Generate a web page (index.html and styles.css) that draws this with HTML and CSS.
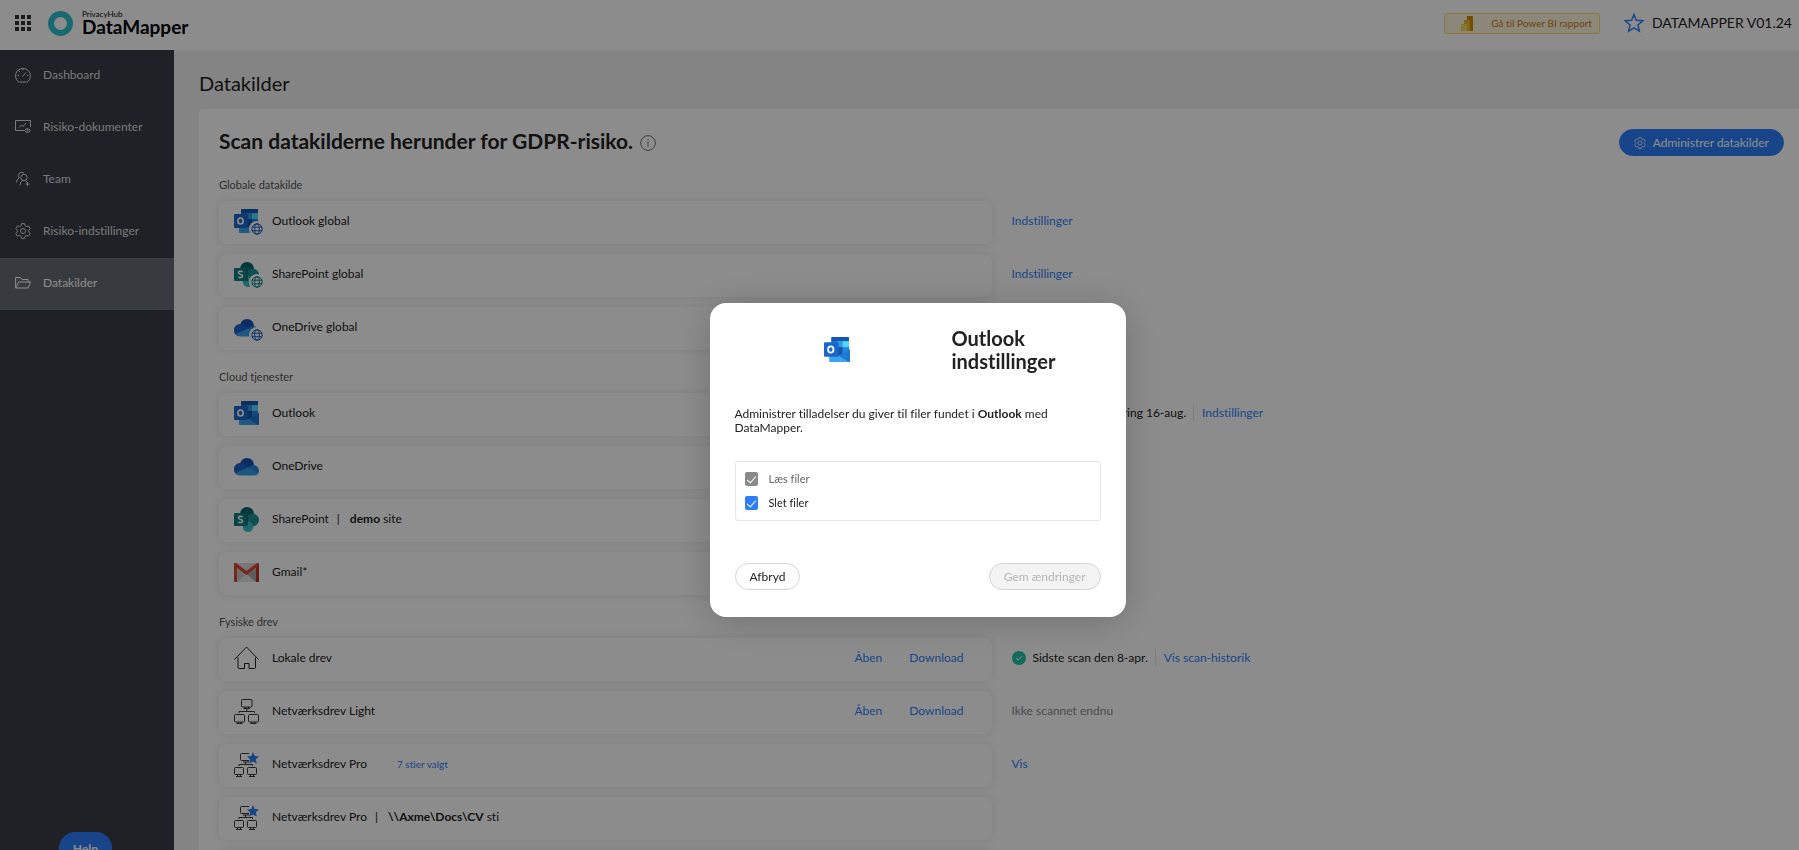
FILE: index.html
```html
<!DOCTYPE html>
<html lang="da">

<head>
	<meta charset="utf-8">
	<title>DataMapper - Datakilder</title>
	<link rel="stylesheet" href="styles.css">
</head>

<body>
	<!-- shared icons -->
	<svg class="sprite" aria-hidden="true">
		<symbol id="i-outlook" viewBox="0 0 25 25">
			<rect x="7" y="0" width="17" height="17" rx="1" fill="#28a8ea" />
			<rect x="7" y="0" width="17" height="4" rx="1" fill="#1557b0" />
			<rect x="7" y="4" width="6" height="7" fill="#1674c9" />
			<rect x="13" y="4" width="5" height="6" fill="#2c9be6" />
			<rect x="18" y="4" width="6" height="6" fill="#50d9ff" />
			<rect x="13" y="10" width="5" height="7" fill="#1257ae" />
			<rect x="18" y="10" width="6" height="6" fill="#2481d8" />
			<path d="M5 13l20-1v11q0 1-1 1H6q-1 0-1-1z" fill="#39a5ee" />
			<path d="M13 10h5v8h-5z" fill="#1556a9" />
			<path d="M18 10h6v2l-6 4z" fill="#2783da" />
			<path d="M25 12v11q0 1-1 1l-10-6z" fill="#1d78d0" />
			<rect x="0" y="5" width="14" height="14" rx="1" fill="#1c66cb" />
			<ellipse cx="6.500" cy="12" rx="2.600" ry="3" fill="none" stroke="#fff" stroke-width="1.700" />
		</symbol>
		<symbol id="i-onedrive" viewBox="0 0 25 25">
			<circle cx="13" cy="11" r="7" fill="#1450b0" />
			<path d="M0 15.500a6 6 0 0 1 6-6.500q2.500 0 4.500 1.300l8 4.700L3 20.500Q0 19 0 15.500z" fill="#1a62c8" />
			<path d="M13.500 13.500l5-2.500a6 6 0 0 1 6.500 5.500q0 2-1.500 3.500z" fill="#2b86df" />
			<path d="M1.500 19L14 13.500l10.500 5.500q-1.200 2.500-4 2.500H6q-3 0-4.500-2.500z" fill="#349ee8" />
		</symbol>
		<symbol id="i-sharepoint" viewBox="0 0 25 25">
			<circle cx="13" cy="7" r="7" fill="#046468" />
			<circle cx="18.500" cy="13" r="6.500" fill="#1b9296" />
			<circle cx="14" cy="19.800" r="5.200" fill="#35c0c8" />
			<path d="M7 6h6q1 0 1 1v12H8z" fill="#044f53" opacity=".6" />
			<rect x="0" y="6" width="13" height="13" rx="1" fill="#0c7c80" />
			<path d="M8.800 9.800q-4.400-1.600-4.400.8 0 1.200 2.100 1.800 2.300.6 2.100 2-.4 2-4.400.7" fill="none" stroke="#fff" stroke-width="1.500" />
		</symbol>
		<symbol id="i-gmail" viewBox="0 0 25 25">
			<path d="M1 3h23v19H1z" fill="#d9d9d9" />
			<path d="M3 9l9.500 6L22 9v13H3z" fill="#c9c9c9" />
			<path d="M22 9v13h-3l-7-7z" fill="#aaa" />
			<path d="M3 22l9.500-8 9.500 8z" fill="#e3e3e3" />
			<path d="M0 4q0-1 1-1h1l10.500 8L23 3h1q1 0 1 1v17q0 1-1 1h-2V8l-9.500 7L3 8v14H1q-1 0-1-1z" fill="#d8473a" />
			<path d="M22 8l3-3v16q0 1-1 1h-2z" fill="#b5342a" />
		</symbol>
		<symbol id="i-globe" viewBox="0 0 16 16">
			<circle cx="8" cy="8" r="8" fill="#fff" />
			<g fill="none" stroke="currentColor">
				<circle cx="8" cy="8" r="5.200" />
				<ellipse cx="8" cy="8" rx="2.300" ry="5.200" />
				<path d="M3 6.200h10M3 9.800h10" />
			</g>
		</symbol>
		<symbol id="i-house" viewBox="0 0 25 25">
			<path d="M.5 13.500L12.500 1l12 12.500M4 11.500v10q0 1 1 1h5.500v-5h4.500v5h5.500q1 0 1-1v-10" fill="none" stroke="#222" />
		</symbol>
		<symbol id="i-network" viewBox="0 0 25 25">
			<g fill="none" stroke="#222" stroke-width=".9">
				<rect x="7.500" y=".5" width="10.500" height="7.500" rx="1" />
				<rect x=".5" y="15.500" width="10" height="7.500" rx="1" />
				<rect x="14.500" y="15.500" width="10" height="7.500" rx="1" />
				<path d="M11 8v1.500M14.500 8v1.500M9.500 9.500H16M12.800 10v2.500M5 14v-1.500h15.500V14M4 23v1.500M7 23v1.500M2.500 24.500h6M18 23v1.500M21 23v1.500M16.500 24.500h6" />
			</g>
		</symbol>
		<symbol id="i-network-pro" viewBox="0 0 25 25">
			<g fill="none" stroke="#222" stroke-width=".9">
				<path d="M15 1.500H7.500q-1 0-1 1v5q0 1 1 1H15M9 10h6" />
				<rect x=".5" y="15.500" width="9" height="7" rx="1" />
				<rect x="13.500" y="15.500" width="9" height="7" rx="1" />
				<path d="M11.500 10v2.500M5 14v-1.500h13.500V14M3.500 23v1.500M6.500 23v1.500M2 24.500h6M16.500 23v1.500M19.500 23v1.500M15 24.500h6" />
			</g>
			<path d="M19 0l1.700 4 4.300.4-3.200 2.900 1 4.300L19 9.400l-3.800 2.200 1-4.300L13 4.400l4.300-.4z" fill="#2a7cf0" />
		</symbol>
		<symbol id="i-gear" viewBox="0 0 16 16">
			<g fill="none" stroke="currentColor" stroke-linejoin="round">
				<path d="M6.500.6h3l.5 2.100 1.500.9 2.100-.7 1.600 2.700-1.500 1.500v1.800l1.500 1.500-1.600 2.700-2.100-.7-1.500.9-.5 2.100h-3L6 13.300l-1.500-.9-2.100.7L.8 10.400l1.500-1.500V7.100L.8 5.600l1.600-2.700 2.100.7L6 2.700z" />
				<circle cx="8" cy="8" r="2.500" />
			</g>
		</symbol>
	</svg>

	<header class="topbar">
		<button class="apps" type="button" aria-label="Apps">
			<svg viewBox="0 0 16 16" width="16" height="16">
				<path d="M0 0h4v4H0zM6 0h4v4H6zM12 0h4v4h-4zM0 6h4v4H0zM6 6h4v4H6zM12 6h4v4h-4zM0 12h4v4H0zM6 12h4v4H6zM12 12h4v4h-4z" fill="#333" />
			</svg>
		</button>
		<a class="logo" href="#">
			<svg viewBox="0 0 25 25" width="25" height="25">
				<circle cx="12.500" cy="12.500" r="9.500" fill="none" stroke="#2fc0cd" stroke-width="6" />
			</svg>
			<span class="logo-text">
				<small>PrivacyHub</small>
				<b>DataMapper</b>
			</span>
		</a>
		<button class="powerbi" type="button">
			<svg viewBox="0 0 12 15" width="12" height="15">
				<path d="M6 0h5q1 0 1 1v14H6z" fill="#d48a0c" />
				<path d="M3 4h5q1 0 1 1v10H3z" fill="#edba2b" />
				<path d="M0 8h5q1 0 1 1v6H0z" fill="#f7d75e" />
			</svg>
			Gå til Power BI rapport
		</button>
		<div class="plan">
			<svg viewBox="0 0 20 20" width="20" height="20">
				<path d="M10 1.500l2.400 5.700 6.400.5-4.900 4.200 1.500 6.300-5.400-3.300-5.400 3.300 1.500-6.300-4.900-4.200 6.400-.5z" fill="none" stroke="#2d7ff9" stroke-width="1.500" />
			</svg>
			<span>DATAMAPPER V01.24</span>
		</div>
	</header>

	<div class="layout">
		<nav class="sidebar">
			<a href="#">
				<svg viewBox="0 0 16 16" width="16" height="16" fill="none" stroke="currentColor">
					<path d="M3 14.500a7.500 7.500 0 1 1 10 0q-.5.600-1.500.600h-7q-1 0-1.500-.6z" />
					<path d="M7.500 9.500L11 5.500M8 2v1.500M4 4l1 1M2.500 8.500H4M12 8.500h1.500" />
				</svg>
				Dashboard
			</a>
			<a href="#">
				<svg viewBox="0 0 16 16" width="16" height="16" fill="none" stroke="currentColor">
					<path d="M9 11.500H.5v-10h15V8M4 8.500l2.500-2.500L8 7.500 11 4" />
					<path d="M9.500 11.500q3-4 6 0-3 4-6 0z" />
					<circle cx="12.500" cy="11.500" r=".7" />
				</svg>
				Risiko-dokumenter
			</a>
			<a href="#">
				<svg viewBox="0 0 16 16" width="16" height="16" fill="none" stroke="currentColor">
					<circle cx="9" cy="6.500" r="3.200" />
					<path d="M5 14.500q0-3.500 2.500-5M10.500 9.500l2 2.500M12.500 11v4M10.500 13h4M1.500 11.500q0-3 2.500-4.500M4.500 7q-2.500-2-.5-4.500t5-.5" />
				</svg>
				Team
			</a>
			<a href="#"><svg width="16" height="16"><use href="#i-gear" /></svg>Risiko-indstillinger</a>
			<a href="#" class="active">
				<svg viewBox="0 0 16 16" width="16" height="16" fill="none" stroke="currentColor">
					<path d="M.6 13V2.500h5l1.500 2h6v2.500M.6 13l3-6h12l-2.500 6z" />
				</svg>
				Datakilder
			</a>
			<button class="help" type="button">Help</button>
		</nav>

		<main class="content">
			<h1>Datakilder</h1>
			<div class="panel">
				<div class="panel-head">
					<h2>Scan datakilderne herunder for GDPR-risiko.</h2>
					<svg class="info" viewBox="0 0 16 16" width="16" height="16">
						<circle cx="8" cy="8" r="7.400" fill="none" stroke="#777" />
						<path d="M8 6.500V12M8 4v1.300" stroke="#777" />
					</svg>
					<button class="btn btn-primary" type="button">
						<svg width="12" height="12"><use href="#i-gear" /></svg>
						Administrer datakilder
					</button>
				</div>

				<section class="group">
					<h3>Globale datakilde</h3>
					<div class="row">
						<div class="source">
							<span class="icon"><svg><use href="#i-outlook" /></svg><svg class="globe"><use href="#i-globe" /></svg></span>
							<span>Outlook global</span>
						</div>
						<div class="status"><a href="#">Indstillinger</a></div>
					</div>
					<div class="row">
						<div class="source">
							<span class="icon"><svg><use href="#i-sharepoint" /></svg><svg class="globe globe-teal"><use href="#i-globe" /></svg></span>
							<span>SharePoint global</span>
						</div>
						<div class="status"><a href="#">Indstillinger</a></div>
					</div>
					<div class="row">
						<div class="source">
							<span class="icon"><svg><use href="#i-onedrive" /></svg><svg class="globe"><use href="#i-globe" /></svg></span>
							<span>OneDrive global</span>
						</div>
					</div>
				</section>

				<section class="group">
					<h3>Cloud tjenester</h3>
					<div class="row">
						<div class="source">
							<span class="icon"><svg><use href="#i-outlook" /></svg></span>
							<span>Outlook</span>
						</div>
						<div class="status">
							<svg class="check" viewBox="0 0 14 14"><circle cx="7" cy="7" r="7" fill="#24bfa5" /><path d="M4 7l2.200 2.200L10 5" fill="none" stroke="#fff" /></svg>
							<span>Seneste rapportering 16-aug.</span>
							<a class="next" href="#">Indstillinger</a>
						</div>
					</div>
					<div class="row">
						<div class="source">
							<span class="icon"><svg><use href="#i-onedrive" /></svg></span>
							<span>OneDrive</span>
						</div>
					</div>
					<div class="row">
						<div class="source">
							<span class="icon"><svg><use href="#i-sharepoint" /></svg></span>
							<span>SharePoint</span>
							<span class="bar">|</span>
							<span><b>demo</b> site</span>
						</div>
					</div>
					<div class="row">
						<div class="source">
							<span class="icon"><svg><use href="#i-gmail" /></svg></span>
							<span>Gmail*</span>
						</div>
					</div>
				</section>

				<section class="group">
					<h3>Fysiske drev</h3>
					<div class="row">
						<div class="source">
							<span class="icon"><svg><use href="#i-house" /></svg></span>
							<span>Lokale drev</span>
							<div class="actions"><a href="#">Åben</a><a href="#">Download</a></div>
						</div>
						<div class="status">
							<svg class="check" viewBox="0 0 14 14"><circle cx="7" cy="7" r="7" fill="#24bfa5" /><path d="M4 7l2.200 2.200L10 5" fill="none" stroke="#fff" /></svg>
							<span>Sidste scan den 8-apr.</span>
							<a class="next" href="#">Vis scan-historik</a>
						</div>
					</div>
					<div class="row">
						<div class="source">
							<span class="icon"><svg><use href="#i-network" /></svg></span>
							<span>Netværksdrev Light</span>
							<div class="actions"><a href="#">Åben</a><a href="#">Download</a></div>
						</div>
						<div class="status muted">Ikke scannet endnu</div>
					</div>
					<div class="row">
						<div class="source">
							<span class="icon"><svg><use href="#i-network-pro" /></svg></span>
							<span>Netværksdrev Pro</span>
							<a class="paths" href="#">7 stier valgt</a>
						</div>
						<div class="status"><a href="#">Vis</a></div>
					</div>
					<div class="row">
						<div class="source">
							<span class="icon"><svg><use href="#i-network-pro" /></svg></span>
							<span>Netværksdrev Pro</span>
							<span class="bar">|</span>
							<span><b>\\Axme\Docs\CV</b> sti</span>
						</div>
					</div>
					<div class="row">
						<div class="source"></div>
					</div>
				</section>
			</div>
		</main>
	</div>

	<div class="mask">
		<div class="modal" role="dialog" aria-modal="true" aria-labelledby="modal-title">
			<div class="modal-head">
				<svg width="26" height="26"><use href="#i-outlook" /></svg>
				<h2 id="modal-title">Outlook indstillinger</h2>
			</div>
			<p>Administrer tilladelser du giver til filer fundet i <b>Outlook</b> med DataMapper.</p>
			<div class="permissions">
				<label class="disabled"><input type="checkbox" checked disabled>Læs filer</label>
				<label><input type="checkbox" checked>Slet filer</label>
			</div>
			<div class="modal-foot">
				<button class="btn" type="button">Afbryd</button>
				<button class="btn" type="button" disabled>Gem ændringer</button>
			</div>
		</div>
	</div>
</body>

</html>
```
FILE: styles.css
```css
* {
	box-sizing: border-box;
}

body {
	margin: 0;
	height: 100vh;
	display: flex;
	flex-direction: column;
	overflow: hidden;
	background-color: #f0f0f0;
	color: #222;
	font-family: Lato, "Liberation Sans", sans-serif;
	font-size: 12px;
	font-variant-ligatures: none;
	line-height: 16px;
}

h1,
h2,
h3,
p {
	margin: 0;
}

a {
	color: #2d7ff9;
	text-decoration: none;
}

b {
	font-weight: 700;
}

button {
	font: inherit;
	color: inherit;
	cursor: pointer;
}

svg {
	flex: none;
}

.sprite {
	position: absolute;
	width: 0;
	height: 0;
}

/* top bar */
.topbar {
	display: flex;
	align-items: center;
	flex: none;
	height: 50px;
	padding: 0 7px 4px 15px;
	background-color: #fff;
}

.apps {
	display: flex;
	margin-right: 17px;
	padding: 0;
	border: 0;
	background: none;
}

.logo {
	display: flex;
	align-items: center;
	gap: 9px;
	color: #000;
}

.logo-text {
	display: flex;
	flex-direction: column;
}

.logo-text small {
	font-size: 8px;
	line-height: 8px;
}

.logo-text b {
	font-size: 19px;
	line-height: 18px;
}

.powerbi {
	display: flex;
	align-items: center;
	gap: 18px;
	height: 21px;
	margin-left: auto;
	padding: 0 7px 0 16px;
	border: 1px solid #ffd666;
	border-radius: 3px;
	background-color: #fff8dc;
	color: #c9770c;
	font-size: 10px;
}

.plan {
	display: flex;
	align-items: center;
	gap: 8px;
	margin-left: 24px;
	font-size: 14px;
}

/* side menu */
.layout {
	display: flex;
	flex: 1;
	min-height: 0;
}

.sidebar {
	position: relative;
	flex: none;
	width: 174px;
	background-color: #3a3c45;
}

.sidebar a {
	display: flex;
	align-items: center;
	gap: 12px;
	height: 52px;
	padding: 0 15px 3px;
	color: #dcdcde;
}

.sidebar .active {
	background-color: #646b73;
	color: #fff;
}

/* peeks up from the bottom edge */
.help {
	position: absolute;
	left: 59px;
	bottom: -16px;
	width: 53px;
	height: 34px;
	border: 0;
	border-radius: 16px;
	background-color: #2d7ff9;
	color: #fff;
	font-weight: 700;
}

/* content */
.content {
	flex: 1;
	min-width: 0;
	padding: 21px 0 0 25px;
	overflow: hidden;
}

h1 {
	margin-bottom: 14px;
	font-size: 20px;
	font-weight: 400;
	line-height: 24px;
}

.panel {
	padding: 20px 15px 20px 20px;
	border-radius: 4px 0 0 0;
	background-color: #fff;
}

.panel-head {
	display: flex;
	align-items: center;
	gap: 7px;
	margin-bottom: 21px;
}

.panel-head h2 {
	padding-bottom: 3px;
	font-size: 21px;
	font-weight: 700;
	line-height: 24px;
}

.btn {
	display: flex;
	align-items: center;
	gap: 7px;
	height: 27px;
	padding: 0 14px;
	border: 1px solid #d4d4d4;
	border-radius: 14px;
	background-color: #fff;
}

.btn:disabled {
	background-color: #f3f3f3;
	color: #b5b5b5;
}

.btn-primary {
	margin-left: auto;
	border-color: #2d7ff9;
	background-color: #2d7ff9;
	color: #fff;
}

.group {
	display: flex;
	flex-direction: column;
	gap: 10px;
	margin-bottom: 19px;
}

.group h3 {
	margin-bottom: -2px;
	color: #555;
	font-size: 11px;
	font-weight: 400;
	line-height: 16px;
}

.row {
	display: grid;
	grid-template-columns: 1fr 1fr;
	gap: 20px;
}

.source {
	display: flex;
	align-items: center;
	height: 43px;
	padding: 0 28px 3px 15px;
	border-radius: 8px;
	background-color: #fff;
	box-shadow: 0 0 8px rgba(0, 0, 0, 0.1);
}

.icon {
	position: relative;
	width: 25px;
	height: 25px;
	margin-right: 13px;
}

.icon svg {
	display: block;
	width: 25px;
	height: 25px;
}

.icon .globe {
	position: absolute;
	right: -6px;
	bottom: -3px;
	width: 16px;
	height: 16px;
	color: #1d5cc0;
}

.icon .globe-teal {
	color: #0c7c80;
}

.bar {
	margin: 0 10px 0 8px;
}

.paths {
	margin-left: 30px;
	font-size: 10px;
}

.actions {
	display: flex;
	gap: 27px;
	margin-left: auto;
}

.status {
	display: flex;
	align-items: center;
	padding-bottom: 3px;
}

.check {
	width: 14px;
	height: 14px;
	margin-right: 7px;
}

.next {
	margin-left: 7px;
	padding-left: 8px;
	border-left: 1px solid #e4e4e4;
}

.muted {
	color: #8a8a8a;
}

/* dialog */
.mask {
	position: fixed;
	inset: 0;
	display: flex;
	align-items: center;
	justify-content: center;
	padding: 70px 0 0 36px;
	background-color: rgba(0, 0, 0, 0.45);
}

.modal {
	width: 416px;
	padding: 24px 25px 27px;
	border-radius: 16px;
	background-color: #fff;
	box-shadow: 0 4px 36px rgba(0, 0, 0, 0.2);
}

.modal-head {
	display: grid;
	grid-template-columns: 204px 1fr;
	gap: 13px;
	align-items: center;
	justify-items: center;
	margin-bottom: 34px;
}

.modal-head h2 {
	justify-self: start;
	font-size: 20px;
	font-weight: 700;
	line-height: 23px;
}

.modal p {
	margin-bottom: 26px;
	line-height: 14px;
}

.permissions {
	display: flex;
	flex-direction: column;
	gap: 8px;
	margin-bottom: 42px;
	padding: 9px;
	border: 1px solid #e6e6e6;
	border-radius: 3px;
}

.permissions label {
	display: flex;
	align-items: center;
	gap: 11px;
	font-size: 11px;
}

.permissions .disabled {
	color: #666;
}

.permissions input {
	appearance: none;
	display: flex;
	justify-content: center;
	width: 13px;
	height: 14px;
	margin: 0;
	border-radius: 2px;
	background-color: #2d7ff9;
}

.permissions input:disabled {
	background-color: #8a8a8a;
}

.permissions input::before {
	content: "";
	width: 4px;
	height: 8px;
	margin-top: 2px;
	border: solid #fff;
	border-width: 0 1px 1px 0;
	transform: rotate(42deg);
}

.modal-foot {
	display: flex;
	justify-content: space-between;
}
```
